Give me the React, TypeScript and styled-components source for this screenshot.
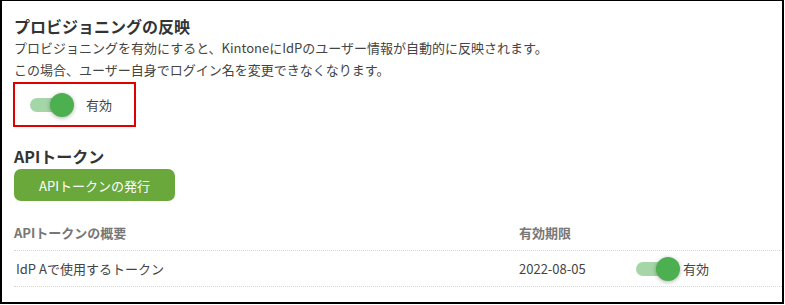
import React from "react";
import styled, { createGlobalStyle } from "styled-components";

const Global = createGlobalStyle`
  html, body { margin: 0; padding: 0; background: #fff; }
  body { font-family: "Noto Sans CJK JP", "Noto Sans", sans-serif; }
  * { box-sizing: border-box; }
`;

const Frame = styled.div`
  width: 784px;
  height: 304px;
  border-style: solid;
  border-color: #000;
  border-width: 1px 2px 2px 2px;
  padding: 14px 0 0 12px;
  display: flex;
  flex-direction: column;
  align-items: flex-start;
  overflow: hidden;
`;

const Heading = styled.h2<{ $mt?: number }>`
  margin: ${(p) => p.$mt ?? 0}px 0 0 0;
  font-size: 16px;
  line-height: 22px;
  font-weight: 700;
  color: #333;
`;

const Desc = styled.p`
  margin: 0;
  font-size: 13px;
  line-height: 22px;
  color: #444;
`;

const Highlight = styled.div`
  margin: 1px 0 0 -1px;
  width: 123px;
  height: 45px;
  border: 2px solid #e00000;
  display: flex;
  align-items: center;
  padding-left: 15px;
`;

const Track = styled.span`
  position: relative;
  display: inline-block;
  width: 40px;
  height: 14px;
  border-radius: 7px;
  background: #a5d6a7;
  margin-right: 4px;
  flex-shrink: 0;
`;

const Thumb = styled.span`
  position: absolute;
  right: -4px;
  top: 50%;
  width: 24px;
  height: 24px;
  margin-top: -12px;
  border-radius: 50%;
  background: #4caf50;
  box-shadow: 0 1px 4px rgba(0, 0, 0, 0.3);
`;

const ToggleLabel = styled.span<{ $gap: number }>`
  margin-left: ${(p) => p.$gap}px;
  font-size: 13px;
  color: #444;
`;

const Button = styled.button`
  margin-top: 2px;
  width: 161px;
  height: 32px;
  border: none;
  border-radius: 7px;
  background: #6aa83c;
  color: #fff;
  font-family: inherit;
  font-size: 13px;
  padding: 0;
  cursor: pointer;
`;

const Table = styled.div`
  margin-top: 14px;
  width: 100%;
  display: flex;
  flex-direction: column;
`;

const Row = styled.div<{ $h: number }>`
  display: grid;
  grid-template-columns: 505px 117px 1fr;
  align-items: center;
  height: ${(p) => p.$h}px;
  border-bottom: 1px dotted #d8d8d8;
`;

const HeadCell = styled.div`
  font-size: 13px;
  font-weight: 700;
  color: #777;
`;

const Cell = styled.div<{ $pl?: number }>`
  font-size: 13px;
  color: #444;
  padding-left: ${(p) => p.$pl ?? 0}px;
  display: flex;
  align-items: center;
`;

const Toggle = ({ gap }: { gap: number }) => (
  <>
    <Track>
      <Thumb />
    </Track>
    <ToggleLabel $gap={gap}>有効</ToggleLabel>
  </>
);

export default function App() {
  return (
    <>
      <Global />
      <Frame>
        <Heading>プロビジョニングの反映</Heading>
        <Desc>プロビジョニングを有効にすると、KintoneにIdPのユーザー情報が自動的に反映されます。</Desc>
        <Desc>この場合、ユーザー自身でログイン名を変更できなくなります。</Desc>
        <Highlight>
          <Toggle gap={12} />
        </Highlight>
        <Heading $mt={18}>APIトークン</Heading>
        <Button>APIトークンの発行</Button>
        <Table>
          <Row $h={36}>
            <HeadCell>APIトークンの概要</HeadCell>
            <HeadCell>有効期限</HeadCell>
            <HeadCell />
          </Row>
          <Row $h={36}>
            <Cell $pl={2}>IdP Aで使用するトークン</Cell>
            <Cell>2022-08-05</Cell>
            <Cell>
              <Toggle gap={3} />
            </Cell>
          </Row>
        </Table>
      </Frame>
    </>
  );
}
